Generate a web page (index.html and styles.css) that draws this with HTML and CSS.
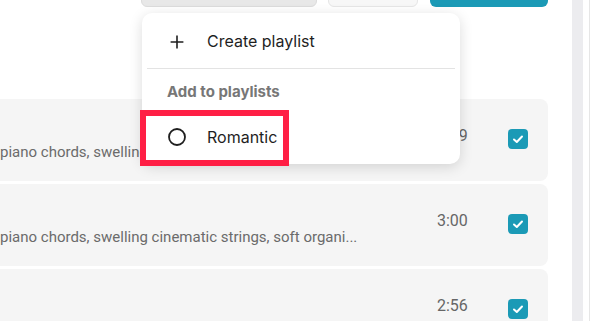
FILE: index.html
```html
<!DOCTYPE html>
<html lang="en">
<head>
    <meta charset="UTF-8">
    <meta name="viewport" content="width=device-width, initial-scale=1.0">
    <title>Tracks</title>
    <link rel="stylesheet" href="styles.css">
</head>
<body>
    <div class="page">
        <div class="main">
            <div class="toolbar">
                <button class="btn btn-gray"></button>
                <button class="btn btn-light"></button>
                <button class="btn btn-teal"></button>
            </div>

            <div class="rows">
                <div class="row">
                    <div class="desc">piano chords, swelling cinematic strings, soft organi...</div>
                    <div class="time">2:59</div>
                    <div class="check"><svg width="20" height="20" viewBox="0 0 20 20"><polyline points="6,10.5 8.8,13 14,7.5" fill="none" stroke="#fff" stroke-width="2" stroke-linecap="round" stroke-linejoin="round"/></svg></div>
                </div>
                <div class="row">
                    <div class="desc">piano chords, swelling cinematic strings, soft organi...</div>
                    <div class="time">3:00</div>
                    <div class="check"><svg width="20" height="20" viewBox="0 0 20 20"><polyline points="6,10.5 8.8,13 14,7.5" fill="none" stroke="#fff" stroke-width="2" stroke-linecap="round" stroke-linejoin="round"/></svg></div>
                </div>
                <div class="row">
                    <div class="desc"></div>
                    <div class="time">2:56</div>
                    <div class="check"><svg width="20" height="20" viewBox="0 0 20 20"><polyline points="6,10.5 8.8,13 14,7.5" fill="none" stroke="#fff" stroke-width="2" stroke-linecap="round" stroke-linejoin="round"/></svg></div>
                </div>
            </div>
        </div>
        <div class="side">
            <div class="scroll-track"></div>
            <div class="side-line"></div>
        </div>
    </div>

    <!-- dropdown del boton de playlist -->
    <div class="menu">
        <div class="menu-item">
            <svg class="menu-icon icon-plus" width="18" height="18" viewBox="0 0 18 18"><path d="M9 2.6v12.8M2.6 9h12.8" stroke="#1f1f1f" stroke-width="1.6" fill="none"/></svg>
            <span>Create playlist</span>
        </div>
        <div class="menu-divider"></div>
        <div class="menu-label">Add to playlists</div>
        <div class="menu-item">
            <svg class="menu-icon" width="18" height="18" viewBox="0 0 18 18"><circle cx="9" cy="9" r="8" stroke="#1f1f1f" stroke-width="1.8" fill="none"/></svg>
            <span>Romantic</span>
        </div>
    </div>

    <div class="highlight"></div>
</body>
</html>
```

FILE: styles.css
```css
body {
    margin: 0;
    padding: 0;
    width: 599px;
    height: 321px;
    overflow: hidden;
    background-color: #fff;
    font-family: Roboto, "Liberation Sans", Arial, sans-serif;
    color: #1f1f1f;
}
.page {
    display: flex;
    height: 321px;
}
.main {
    width: 548px;
    flex: none;
}
.toolbar {
    display: flex;
    gap: 11px;
    height: 36px;
    margin-top: -29px;
    padding-left: 141px;
}
.btn {
    height: 36px;
    border-radius: 6px;
    border: none;
    padding: 0;
}
.btn-gray {
    width: 176px;
    background-color: #e8e8e8;
    border: 1px solid #dcdcdc;
}
.btn-light {
    width: 91px;
    background-color: #f7f7f7;
    border: 1px solid #e6e6e6;
}
.btn-teal {
    width: 118px;
    margin-left: 1px;
    background-color: #1b9ab6;
}
.rows {
    display: flex;
    flex-direction: column;
    gap: 3px;
    margin-top: 92px;
}
.row {
    display: flex;
    height: 82px;
    padding-right: 20px;
    background-color: #f5f5f5;
    border-radius: 0 8px 8px 0;
}
.desc {
    flex: 1;
    padding-top: 43px;
    line-height: 20px;
    font-size: 15px;
    color: #6b6b6b;
    white-space: nowrap;
    overflow: hidden;
}
.time {
    width: 71px;
    padding-top: 27px;
    line-height: 20px;
    font-size: 16px;
    color: #666;
}
.check {
    width: 20px;
    height: 20px;
    margin-top: 30px;
    border-radius: 4px;
    background-color: #1b9ab6;
}
.check svg {
    display: block;
}
.side {
    display: flex;
    padding-left: 24px;
}
.scroll-track {
    width: 11px;
    background-color: #ececef;
}
.side-line {
    width: 1px;
    margin-left: 6px;
    background-color: #e6e6e6;
}
.menu {
    position: absolute;
    left: 142px;
    top: 13px;
    width: 318px;
    height: 151px;
    box-sizing: border-box;
    padding: 0 5px;
    background-color: #fff;
    border-radius: 10px;
    box-shadow: 0 3px 14px rgba(0, 0, 0, 0.14);
    font-family: Inter, Roboto, sans-serif;
}
.menu-item {
    display: flex;
    align-items: center;
    gap: 21px;
    height: 55px;
    padding-left: 21px;
    font-size: 16px;
    color: #1f1f1f;
}
.menu-item:last-child {
    height: 54px;
}
.menu-icon {
    display: block;
    flex: none;
}
.icon-plus {
    margin-top: 2px;
}
.menu-divider {
    height: 1px;
    background-color: #e3e3e3;
}
.menu-label {
    padding: 11px 0 0 20px;
    margin-bottom: 6px;
    line-height: 24px;
    font-size: 15px;
    font-weight: 700;
    color: #777;
}
.highlight {
    position: absolute;
    left: 140px;
    top: 110px;
    width: 149px;
    height: 56px;
    box-sizing: border-box;
    border: 6px solid #ff1f45;
}
```
